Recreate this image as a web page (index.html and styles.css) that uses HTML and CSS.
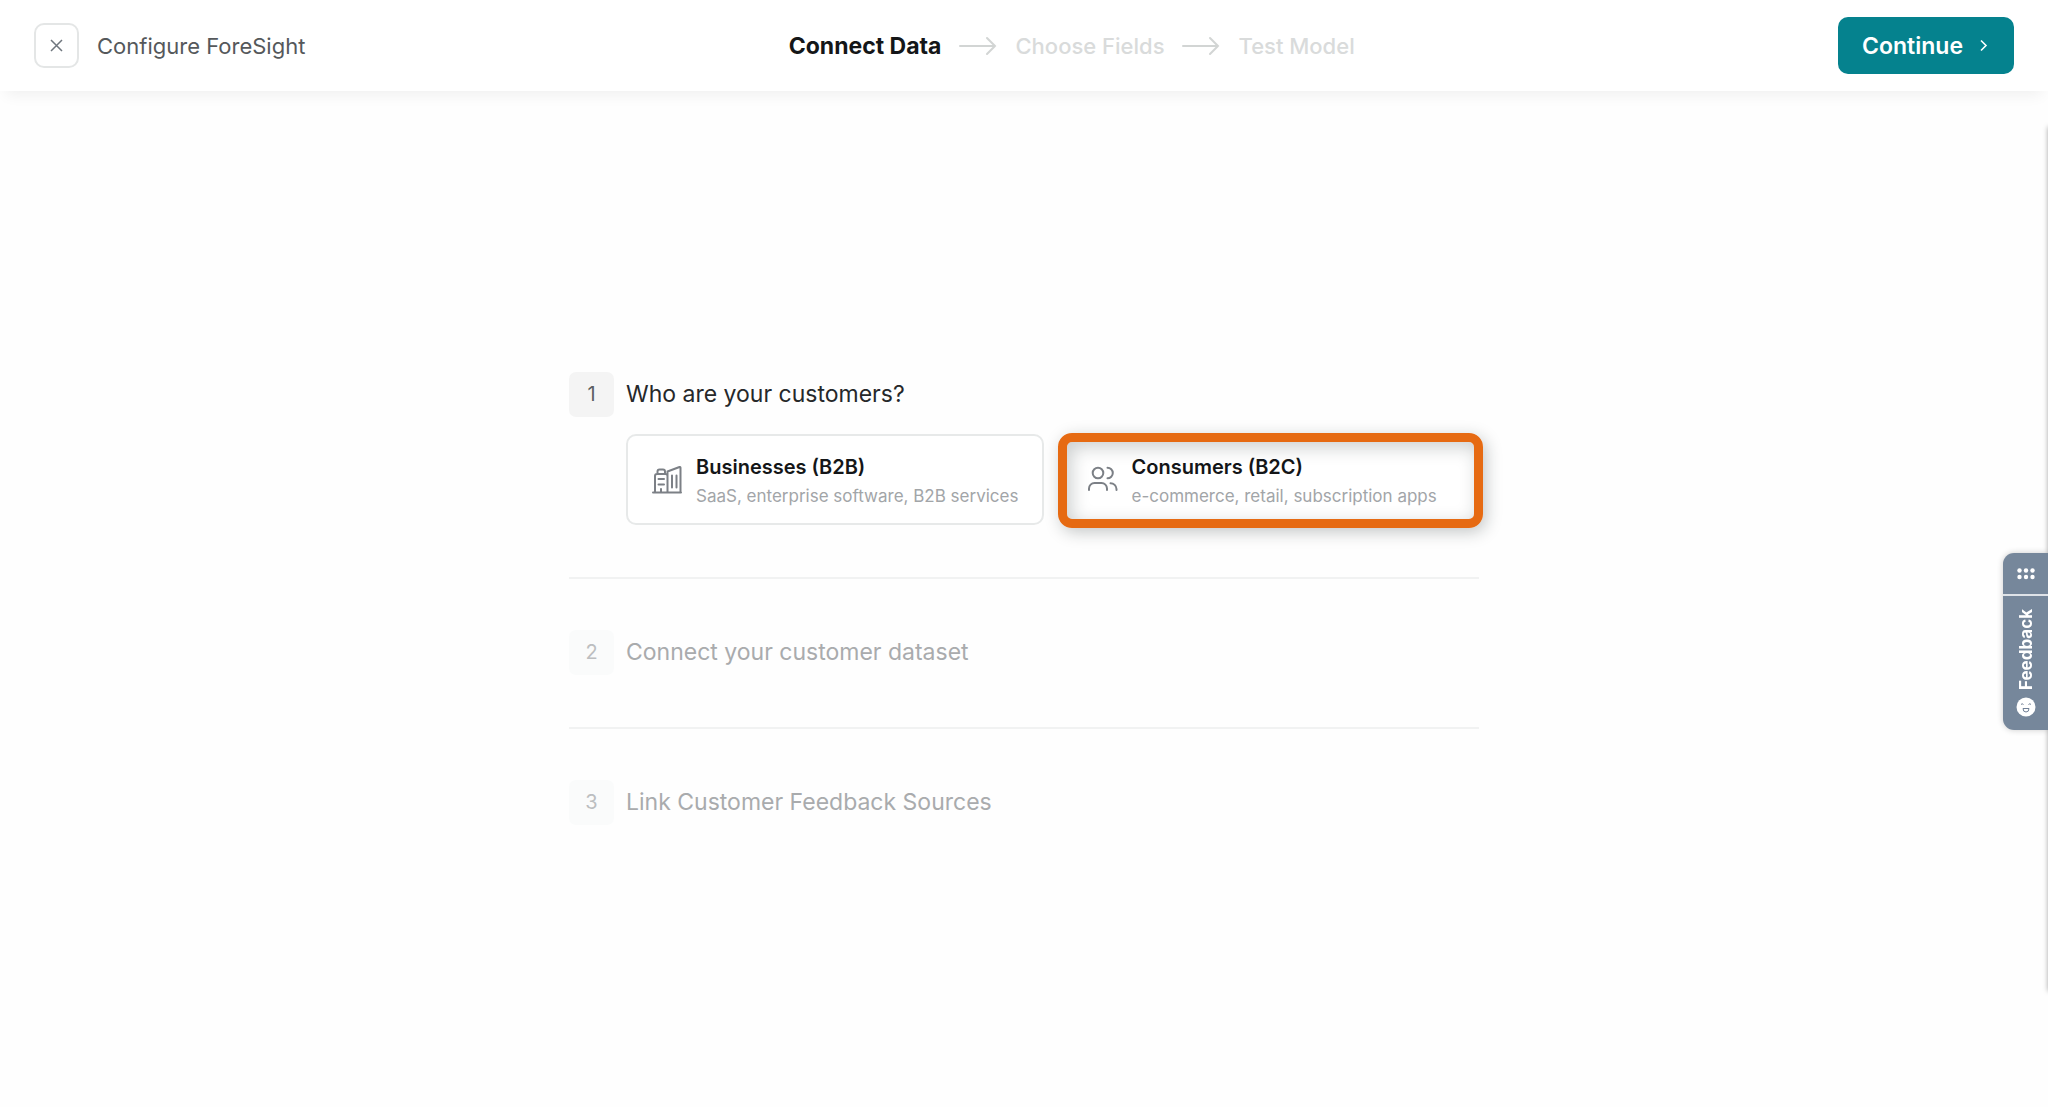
FILE: index.html
```html
<!DOCTYPE html>
<html lang="en">
<head>
    <meta charset="UTF-8">
    <meta name="viewport" content="width=device-width, initial-scale=1.0">
    <title>Configure ForeSight</title>
    <link rel="stylesheet" href="styles.css">
</head>
<body>
    <!-- Header -->
    <header class="header">
        <div class="header-left">
            <button type="button" class="close" aria-label="Close">
                <svg width="13" height="13" viewBox="0 0 13 13"><path d="M1 1l11 11M12 1L1 12"/></svg>
            </button>
            <h1>Configure ForeSight</h1>
        </div>

        <nav class="progress">
            <span class="progress-item active">Connect Data</span>
            <svg class="arrow" width="38" height="20" viewBox="0 0 38 20"><path d="M1 10h35M28 2l8 8-8 8"/></svg>
            <span class="progress-item">Choose Fields</span>
            <svg class="arrow" width="38" height="20" viewBox="0 0 38 20"><path d="M1 10h35M28 2l8 8-8 8"/></svg>
            <span class="progress-item">Test Model</span>
        </nav>

        <button type="button" class="continue">
            Continue
            <svg width="9" height="13" viewBox="0 0 9 13"><path d="M2 1.5l5 5-5 5"/></svg>
        </button>
    </header>

    <!-- Steps -->
    <main class="main-content">
        <section class="step">
            <div class="step-head">
                <span class="step-number">1</span>
                <h2>Who are your customers?</h2>
            </div>
            <div class="cards">
                <button type="button" class="card">
                    <svg class="card-icon" width="30" height="30" viewBox="0 0 30 30">
                        <path d="M1 28.500h28M3 28.500V12a2 2 0 0 1 2-2h8.500a2 2 0 0 1 2 2v16.500M15.500 28.500V7.500l12-4.500q1-.4 1 .8v24.700M5.500 10V7.500a2 2 0 0 1 2-2h3.500a2 2 0 0 1 2 2V10M6.500 15h5.500M6.500 20.500h5.500M9 28v-3M20 11.500v12M24.500 11.500v12"/>
                    </svg>
                    <span class="card-text">
                        <span class="card-title">Businesses (B2B)</span>
                        <span class="card-desc">SaaS, enterprise software, B2B services</span>
                    </span>
                </button>
                <button type="button" class="card highlight">
                    <svg class="card-icon" width="30" height="30" viewBox="0 0 30 30">
                        <circle cx="10" cy="9" r="5.300"/>
                        <path d="M1 26v-1.500a5.500 5.500 0 0 1 5.500-5.500h7a5.500 5.500 0 0 1 5.500 5.500V26M19.500 3.700a5.300 5.300 0 0 1 0 10.600M22.500 19.200a6 6 0 0 1 6 5.800v1"/>
                    </svg>
                    <span class="card-text">
                        <span class="card-title">Consumers (B2C)</span>
                        <span class="card-desc">e-commerce, retail, subscription apps</span>
                    </span>
                </button>
            </div>
        </section>

        <section class="step disabled">
            <div class="step-head">
                <span class="step-number">2</span>
                <h2>Connect your customer dataset</h2>
            </div>
        </section>

        <section class="step disabled">
            <div class="step-head">
                <span class="step-number">3</span>
                <h2>Link Customer Feedback Sources</h2>
            </div>
        </section>
    </main>

    <!-- Collapsed side panel, only its shadow shows -->
    <div class="side-panel"></div>

    <!-- Feedback tab -->
    <aside class="feedback">
        <button type="button" class="feedback-menu" aria-label="Menu">
            <svg width="18" height="12" viewBox="0 0 18 12">
                <circle cx="2.500" cy="2.500" r="2.200"/><circle cx="9" cy="2.500" r="2.200"/><circle cx="15.500" cy="2.500" r="2.200"/>
                <circle cx="2.500" cy="9" r="2.200"/><circle cx="9" cy="9" r="2.200"/><circle cx="15.500" cy="9" r="2.200"/>
            </svg>
        </button>
        <button type="button" class="feedback-open">
            <span class="feedback-label">Feedback</span>
            <svg width="20" height="20" viewBox="0 0 20 20">
                <circle cx="10" cy="10" r="9.500" fill="#fff"/>
                <path d="M5 7.500q1-1.500 2.500 0M12.500 7.500q1.500-1.500 2.500 0M7 11.500h6q0 3.500-3 3.500t-3-3.500z" fill="none" stroke="#718096"/>
            </svg>
        </button>
    </aside>
</body>
</html>
```
FILE: styles.css
```css
* {
    margin: 0;
    padding: 0;
    box-sizing: border-box;
    font-family: Inter, sans-serif;
}

body {
    display: flex;
    flex-direction: column;
    min-height: 100vh;
    background-color: #fefefe;
    color: #1a1c1e;
    overflow-x: hidden;
}

button {
    border: none;
    background: none;
    cursor: pointer;
}

svg {
    flex-shrink: 0;
}

/* Header */
.header {
    display: flex;
    align-items: center;
    justify-content: space-between;
    padding: 17px 34px;
    background-color: white;
    box-shadow: 0 10px 14px -6px rgba(0, 0, 0, 0.06);
}

.header-left {
    display: flex;
    align-items: center;
    gap: 18px;
}

.header h1 {
    font-size: 22px;
    font-weight: 400;
    color: #55585b;
}

.close {
    display: flex;
    align-items: center;
    justify-content: center;
    width: 45px;
    height: 45px;
    border: 2px solid #e4e6e6;
    border-radius: 10px;
}

.close svg {
    stroke: #6f767e;
    stroke-width: 1.5;
}

.progress {
    display: flex;
    align-items: center;
    gap: 18px;
}

.progress-item {
    font-size: 22px;
    font-weight: 500;
    color: #d9dbdb;
}

.progress-item.active {
    font-size: 23px;
    font-weight: 700;
    color: #141618;
}

.arrow {
    fill: none;
    stroke: #d2d5d4;
    stroke-width: 2;
    stroke-linecap: round;
}

.continue {
    display: flex;
    align-items: center;
    gap: 16px;
    height: 57px;
    padding: 0 26px 0 24px;
    border-radius: 10px;
    background-color: #05828e;
    color: white;
    font-size: 23px;
    font-weight: 600;
}

.continue svg {
    fill: none;
    stroke: white;
    stroke-width: 1.6;
}

/* Steps */
.main-content {
    flex: 1;
    display: flex;
    flex-direction: column;
    justify-content: center;
    width: 100%;
    max-width: 910px;
    margin: 0 auto;
    padding-bottom: 2px;
}

.step + .step {
    margin-top: 52px;
    padding-top: 51px;
    border-top: 2px solid #f1f2f2;
}

.step-head {
    display: flex;
    align-items: center;
    gap: 12px;
}

.step-head h2 {
    font-size: 23px;
    font-weight: 400;
    color: #26282a;
}

.step-number {
    display: flex;
    align-items: center;
    justify-content: center;
    width: 45px;
    height: 45px;
    border-radius: 7px;
    background-color: #f4f4f4;
    color: #5c5f62;
    font-size: 20px;
}

.disabled .step-head h2 {
    color: #a9abad;
}

.disabled .step-number {
    background-color: #fafbfb;
    color: #bcbec0;
}

.cards {
    display: grid;
    grid-template-columns: 1fr 1fr;
    gap: 18px;
    margin: 17px 0 0 57px;
}

.card {
    position: relative;
    display: flex;
    align-items: center;
    gap: 14px;
    min-height: 91px;
    padding: 0 12px 0 24px;
    border: 2px solid #e7e9e9;
    border-radius: 10px;
    background-color: white;
    text-align: left;
}

.card-icon {
    fill: none;
    stroke: #7c8086;
    stroke-width: 2;
    stroke-linecap: round;
    stroke-linejoin: round;
}

.card-text {
    display: flex;
    flex-direction: column;
    gap: 4px;
    padding-top: 3px;
}

.card-title {
    font-size: 20px;
    line-height: 26px;
    font-weight: 600;
    color: #141618;
}

.card-desc {
    font-size: 17px;
    line-height: 24px;
    color: #a2a5a8;
}

/* Orange frame over the card */
.highlight::after {
    content: "";
    position: absolute;
    inset: -3px -6px -5px;
    border: 9px solid #e66a12;
    border-radius: 14px;
    box-shadow: 3px 4px 16px rgba(20, 30, 30, 0.25), inset 4px 5px 18px rgba(20, 30, 30, 0.22);
}

/* Right edge */
.side-panel {
    position: fixed;
    top: 127px;
    bottom: 116px;
    left: 100%;
    width: 20px;
    box-shadow: 0 0 5px rgba(0, 0, 0, 0.35);
}

.feedback {
    position: fixed;
    top: 553px;
    right: 0;
    width: 45px;
    border-radius: 11px 0 0 11px;
    background-color: #76879b;
    box-shadow: 0 0 6px rgba(0, 0, 0, 0.2);
}

.feedback-menu {
    display: flex;
    align-items: center;
    justify-content: center;
    width: 100%;
    height: 43px;
    border-bottom: 2px solid #dfe3e8;
}

.feedback-menu svg {
    fill: white;
}

.feedback-open {
    display: flex;
    flex-direction: column;
    align-items: center;
    gap: 7px;
    width: 100%;
    padding: 13px 0;
}

.feedback-label {
    writing-mode: vertical-rl;
    transform: rotate(180deg);
    color: white;
    font-size: 17px;
    line-height: 20px;
    font-weight: 700;
}
```
